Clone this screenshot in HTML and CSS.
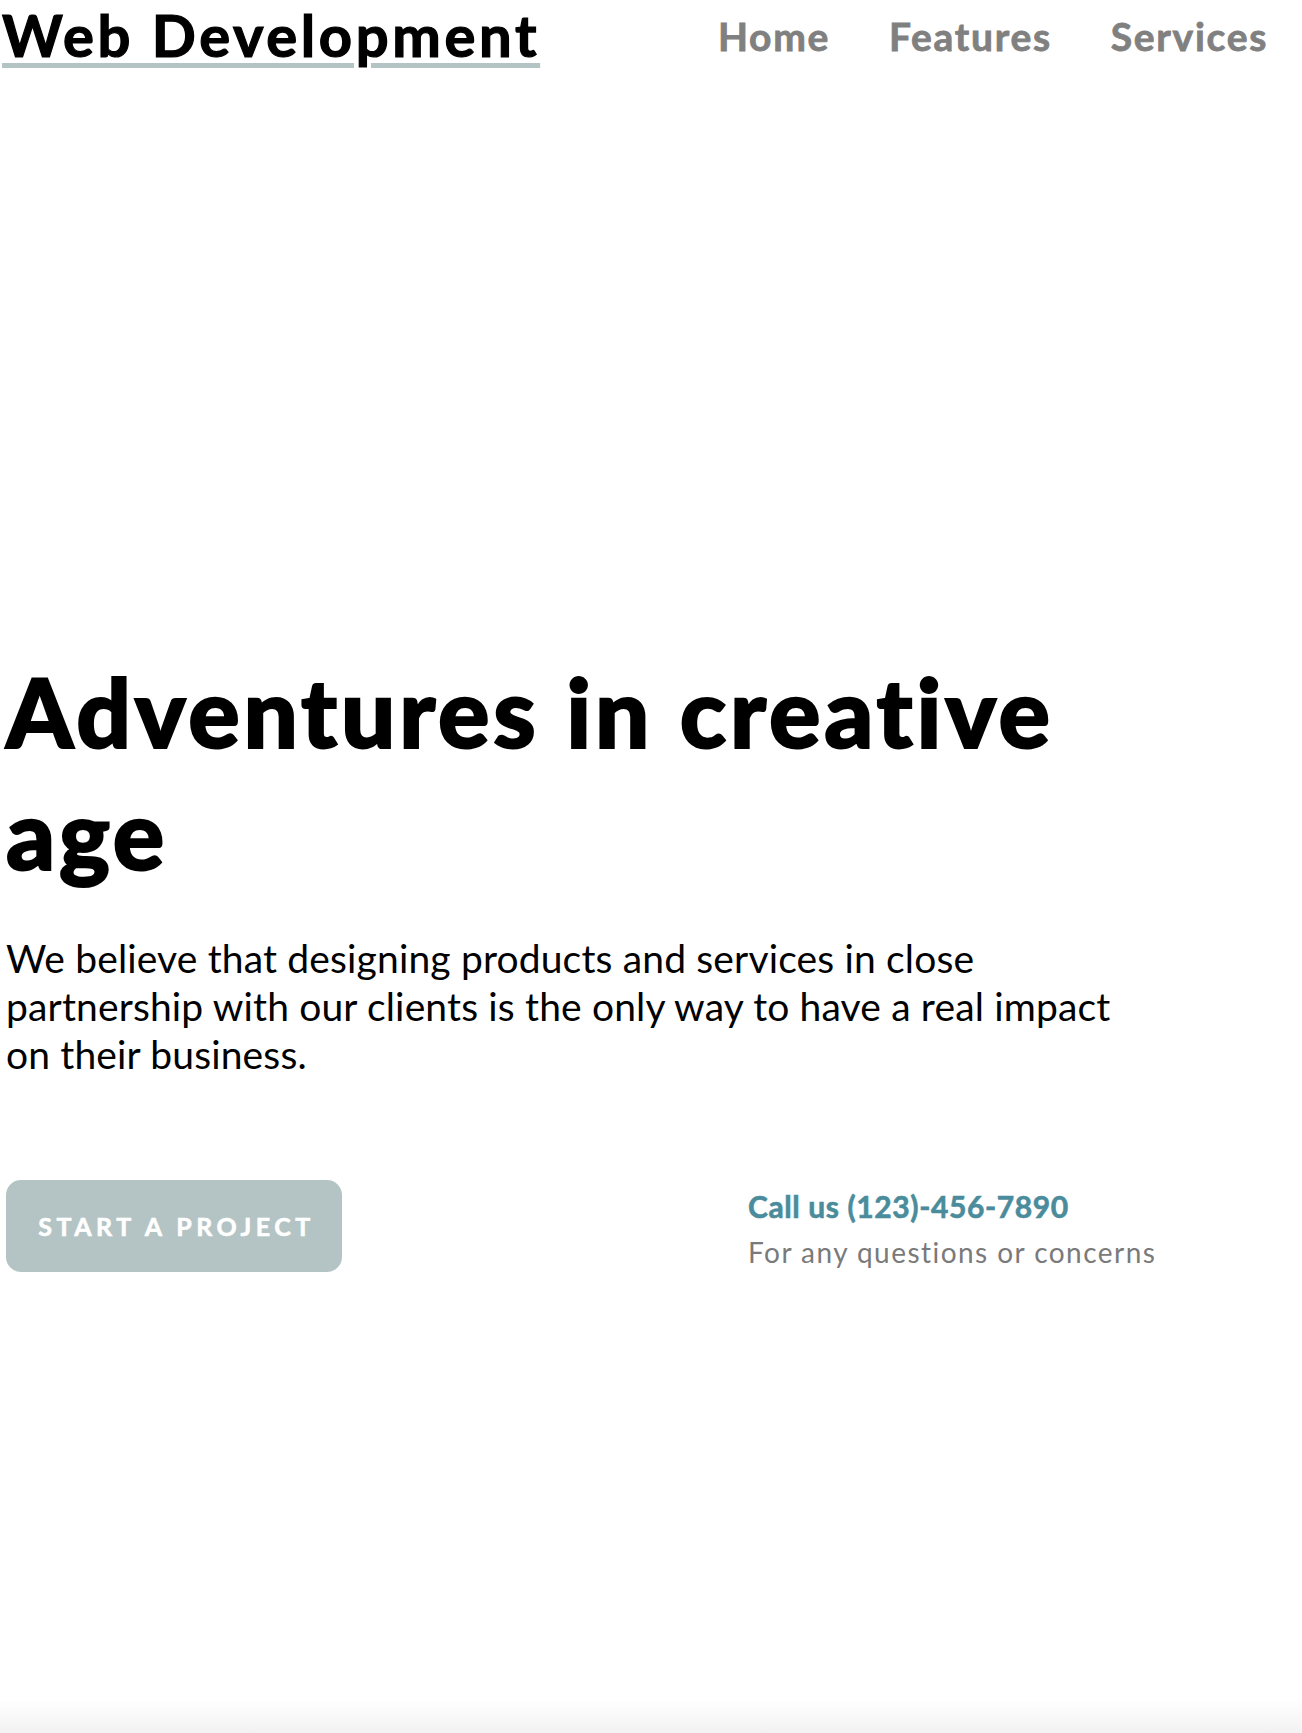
FILE: index.html
```html
<!DOCTYPE html>
<html lang="en">
<head>
<meta charset="utf-8">
<title>Web Development</title>
<link rel="stylesheet" href="styles.css">
</head>
<body>
<div class="page">
  <header class="site-header">
    <a class="brand" href="#">Web Development</a>
    <nav class="main-nav">
      <a href="#">Home</a>
      <a href="#">Features</a>
      <a href="#">Services</a>
    </nav>
  </header>

  <section class="hero">
    <h1 class="hero-title">Adventures in creative age</h1>
    <p class="hero-text">We believe that designing products and services in close partnership with our clients is the only way to have a real impact on their business.</p>
    <div class="hero-actions">
      <a class="btn-project" href="#">START A PROJECT</a>
      <div class="contact">
        <div class="contact-phone">Call us (123)-456-7890</div>
        <div class="contact-note">For any questions or concerns</div>
      </div>
    </div>
  </section>

  <div class="bottom-fade"></div>
</div>
</body>
</html>
```

FILE: styles.css
```css
* { box-sizing: border-box; }

html, body {
  margin: 0;
  padding: 0;
  background: #ffffff;
}

body {
  font-family: "Lato", "Noto Sans", sans-serif;
  color: #000;
}

a { text-decoration: none; }

.page {
  min-height: 100vh;
  display: flex;
  flex-direction: column;
}

.site-header {
  display: flex;
  justify-content: space-between;
  align-items: flex-start;
  padding: 0 34px 0 2px;
}

.brand {
  font-size: 58px;
  font-weight: 700;
  line-height: 1.2;
  letter-spacing: 3.6px;
  color: #000;
  -webkit-text-stroke: 1.2px #000;
  text-decoration: underline;
  text-decoration-color: #b4c4c4;
  text-decoration-thickness: 5px;
  text-underline-offset: 6px;
  text-decoration-skip-ink: auto;
}

.main-nav {
  display: flex;
  gap: 59px;
  padding-top: 13px;
}

.main-nav a {
  font-size: 39px;
  font-weight: 700;
  line-height: 1.2;
  color: #808080;
  letter-spacing: 1.7px;
  -webkit-text-stroke: 0.8px #808080;
}

.hero {
  padding: 0 6px 0 6px;
  margin-top: 580px;
}

.hero-title {
  margin: 0;
  max-width: 1150px;
  font-size: 96px;
  font-weight: 900;
  line-height: 122px;
  letter-spacing: 3.8px;
  -webkit-text-stroke: 2px #000;
}

.hero-text {
  margin: 40px 0 0 0;
  max-width: 1130px;
  font-size: 39px;
  line-height: 48px;
  font-weight: 400;
  letter-spacing: 0.15px;
}

.hero-actions {
  display: grid;
  grid-template-columns: 742px 1fr;
  align-items: start;
  margin-top: 102px;
}

.btn-project {
  display: flex;
  align-items: center;
  justify-content: center;
  width: 336px;
  height: 92px;
  border-radius: 15px;
  background: #b4c4c4;
  color: #fff;
  font-size: 25px;
  font-weight: 700;
  letter-spacing: 4.5px;
  padding-left: 5px;
  -webkit-text-stroke: 0.6px #fff;
}

.contact {
  padding-top: 6px;
}

.contact-phone {
  font-size: 30px;
  font-weight: 700;
  line-height: 40px;
  color: #4a8c9b;
  letter-spacing: 0.6px;
  -webkit-text-stroke: 0.6px #4a8c9b;
}

.contact-note {
  margin-top: 4px;
  font-size: 28px;
  line-height: 44px;
  color: #7a7a7a;
  letter-spacing: 1.45px;
}

.bottom-fade {
  margin-top: auto;
  height: 34px;
  background: linear-gradient(to bottom, #ffffff, #f2f2f2);
}
```
